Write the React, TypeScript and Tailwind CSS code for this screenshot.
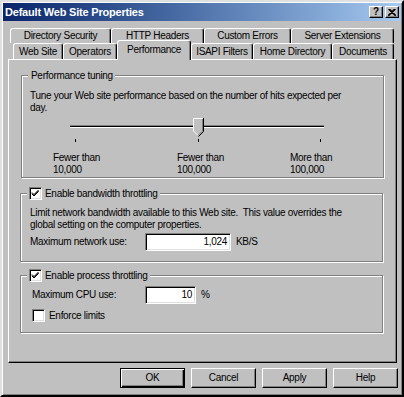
import React from 'react'

const GRAY = 'bg-[#c0c0c0]'

function Check({ checked }: { checked?: boolean }) {
  return (
    <div className="w-[13px] h-[13px] shrink-0 bg-white border border-t-[#808080] border-l-[#808080] border-r-white border-b-white shadow-[inset_1px_1px_#000,inset_-1px_-1px_#dfdfdf]">
      {checked && (
        <svg width="11" height="11" viewBox="0 0 11 11" className="block">
          <path d="M2 4.5 L4 6.5 L8.5 2 M2 5.5 L4 7.5 L8.5 3 M2 6 L4 8 L8.5 3.5" stroke="#000" strokeWidth="1" fill="none" />
        </svg>
      )}
    </div>
  )
}

function Field({ value, width }: { value: string; width: string }) {
  return (
    <div
      className={`${width} h-[18px] bg-white border border-t-[#808080] border-l-[#808080] border-r-white border-b-white shadow-[inset_1px_1px_#000,inset_-1px_-1px_#dfdfdf] flex items-center justify-end pr-[3px]`}
    >
      {value}
    </div>
  )
}

function Group({
  legend,
  children,
  className,
}: {
  legend: React.ReactNode
  children: React.ReactNode
  className: string
}) {
  return (
    <div
      className={`relative w-[363px] ml-[11px] border border-[#808080] shadow-[inset_1px_1px_#fff,1px_1px_#fff] ${className}`}
    >
      <div className={`absolute -top-[7px] left-[6px] ${GRAY} px-[2px] h-[13px] flex items-center gap-[3px]`}>
        {legend}
      </div>
      {children}
    </div>
  )
}

function Tab({ label, w, h, selected }: { label: string; w: string; h: string; selected?: boolean }) {
  return (
    <div
      className={`${w} ${h} ${GRAY} shrink-0 flex items-center justify-center rounded-t-[3px] border-t border-l border-r border-t-white border-l-white border-r-black shadow-[inset_-1px_0_#808080] ${
        selected ? 'relative z-10 self-start -mt-[3px] pb-[2px]' : ''
      }`}
    >
      {label}
    </div>
  )
}

function Button({ label, primary }: { label: string; primary?: boolean }) {
  return (
    <div
      className={`w-[65px] h-[20px] ${GRAY} flex items-center justify-center border ${
        primary
          ? 'border-black shadow-[inset_1px_1px_#fff,inset_-1px_-1px_#000,inset_-2px_-2px_#808080]'
          : 'border-t-white border-l-white border-r-black border-b-black shadow-[inset_-1px_-1px_#808080]'
      }`}
    >
      {label}
    </div>
  )
}

export default function App() {
  return (
    <div
      className={`w-[404px] h-[397px] ${GRAY} border-2 border-t-[#dfdfdf] border-l-[#dfdfdf] border-r-black border-b-black shadow-[inset_1px_1px_#fff,inset_-1px_-1px_#808080] p-px flex flex-col font-['Liberation_Sans',Arial,sans-serif] text-[10px] tracking-[-0.3px] text-black leading-[12px] overflow-hidden`}
    >
      {/* title bar */}
      <div className="h-[18px] shrink-0 bg-gradient-to-r from-[#0a246a] to-[#a6caf0] flex items-center pl-[2px] pr-[2px]">
        <span className="text-white font-bold text-[11px] tracking-[-0.2px]">Default Web Site Properties</span>
        <div className="ml-auto flex gap-[2px]">
          <div className="w-[14px] h-[12px] bg-[#c0c0c0] border border-t-white border-l-white border-r-black border-b-black shadow-[inset_-1px_-1px_#808080] flex items-center justify-center font-bold text-[10px] tracking-normal leading-none">
            ?
          </div>
          <div className="w-[14px] h-[12px] bg-[#c0c0c0] border border-t-white border-l-white border-r-black border-b-black shadow-[inset_-1px_-1px_#808080] flex items-center justify-center">
            <svg width="8" height="7" viewBox="0 0 8 7">
              <path d="M0.5 0 L7.5 7 M7.5 0 L0.5 7 M1.5 0 L8 6.5 M6.5 0 L0 6.5" stroke="#000" strokeWidth="1.1" />
            </svg>
          </div>
        </div>
      </div>

      {/* tabs */}
      <div className="pt-[7px] shrink-0">
        <div className="flex h-[15px] ml-[7px]">
          <Tab label="Directory Security" w="w-[101px]" h="h-[15px]" />
          <Tab label="HTTP Headers" w="w-[93px]" h="h-[15px]" />
          <Tab label="Custom Errors" w="w-[87px]" h="h-[15px]" />
          <Tab label="Server Extensions" w="w-[103px]" h="h-[15px]" />
        </div>
        <div className="flex h-[16px] ml-[10px]">
          <Tab label="Web Site" w="w-[50px]" h="h-[16px]" />
          <Tab label="Operators" w="w-[54px]" h="h-[16px]" />
          <Tab label="Performance" w="w-[74px]" h="h-[20px]" selected />
          <Tab label="ISAPI Filters" w="w-[62px]" h="h-[16px]" />
          <Tab label="Home Directory" w="w-[79px]" h="h-[16px]" />
          <Tab label="Documents" w="w-[62px]" h="h-[16px]" />
        </div>
      </div>

      {/* panel */}
      <div className="ml-[5px] w-[389px] h-[304px] shrink-0 border border-t-white border-l-white border-r-black border-b-black shadow-[inset_-1px_-1px_#808080] pt-[15px]">
        <Group legend={<span className="pl-px">Performance tuning</span>} className="h-[103px] ml-[12px] w-[362px]">
          <div className="pt-[14px] pl-[8px]">
            <div>Tune your Web site performance based on the number of hits expected per</div>
            <div>day.</div>
          </div>
          <svg width="362" height="32" className="block">
            <rect x="48" y="11" width="254" height="1" fill="#808080" />
            <rect x="48" y="12" width="254" height="1" fill="#000" />
            <rect x="48" y="13" width="254" height="1" fill="#fff" />
            <rect x="53" y="25" width="1" height="3" fill="#000" />
            <rect x="176" y="25" width="1" height="3" fill="#000" />
            <rect x="298" y="25" width="1" height="3" fill="#000" />
            <polygon points="171,4 181,4 181,17 176,22 171,17" fill="#c0c0c0" />
            <polyline points="171.5,17 171.5,4.5 181,4.5" stroke="#fff" fill="none" />
            <polyline points="171.5,17 176,21.5" stroke="#fff" fill="none" />
            <polyline points="181.5,4 181.5,17.5 176.5,22.5" stroke="#000" fill="none" />
            <polyline points="180.5,5 180.5,17 176,21.5" stroke="#808080" fill="none" />
          </svg>
          <div className="flex mt-[6px] pl-[31px]">
            <div className="w-[124px]">
              <div>Fewer than</div>
              <div>10,000</div>
            </div>
            <div className="w-[113px]">
              <div>Fewer than</div>
              <div>100,000</div>
            </div>
            <div>
              <div>More than</div>
              <div>100,000</div>
            </div>
          </div>
        </Group>

        <Group
          legend={
            <>
              <Check checked />
              <span>Enable bandwidth throttling</span>
            </>
          }
          className="h-[69px] mt-[15px]"
        >
          <div className="pt-[13px] pl-[9px]">
            <div>Limit network bandwidth available to this Web site.&nbsp; This value overrides the</div>
            <div>global setting on the computer properties.</div>
            <div className="flex items-center mt-[2px]">
              <span className="w-[115px]">Maximum network use:</span>
              <Field value="1,024" width="w-[86px]" />
              <span className="ml-[5px]">KB/S</span>
            </div>
          </div>
        </Group>

        <Group
          legend={
            <>
              <Check checked />
              <span>Enable process throttling</span>
            </>
          }
          className="h-[58px] mt-[13px]"
        >
          <div className="pt-[10px] pl-[11px]">
            <div className="flex items-center">
              <span className="w-[113px]">Maximum CPU use:</span>
              <Field value="10" width="w-[51px]" />
              <span className="ml-[5px]">%</span>
            </div>
            <div className="flex items-center gap-[4px] mt-[5px]">
              <Check />
              <span>Enforce limits</span>
            </div>
          </div>
        </Group>
      </div>

      {/* buttons */}
      <div className="flex justify-end gap-[6px] mt-[5px] pr-[3px]">
        <Button label="OK" primary />
        <Button label="Cancel" />
        <Button label="Apply" />
        <Button label="Help" />
      </div>
    </div>
  )
}
